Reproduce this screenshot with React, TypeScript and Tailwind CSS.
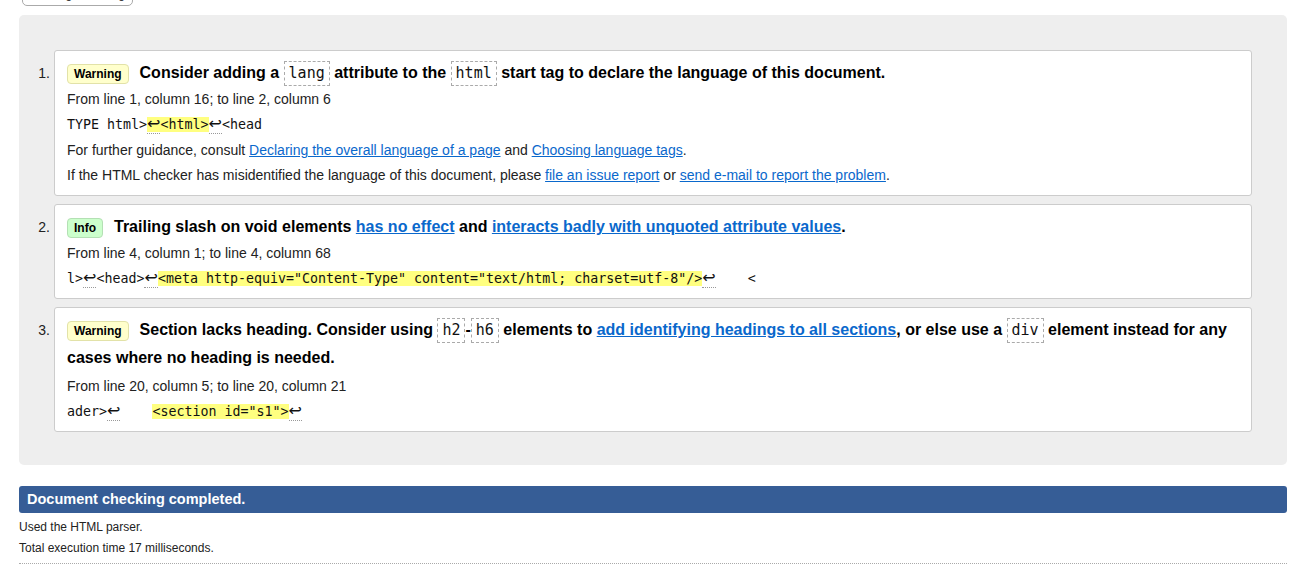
import React from "react";

const mono = "font-['DejaVu_Sans_Mono','Liberation_Mono',monospace]";

function Nl() {
  return (
    <span className="border-b border-dotted border-[#999] font-['DejaVu_Sans',sans-serif] text-[16px] leading-[16px]">
      ↩
    </span>
  );
}

function Hl({ children }: { children: React.ReactNode }) {
  return <span className="bg-[#ffff80]">{children}</span>;
}

function Code({ children }: { children: React.ReactNode }) {
  return (
    <code
      className={`${mono} inline-block border border-dashed border-[#aaa] bg-white px-[4px] py-[2px] text-[15px] font-normal leading-[19px] text-[#111]`}
    >
      {children}
    </code>
  );
}

function Badge({ kind }: { kind: "Warning" | "Info" }) {
  return kind === "Warning" ? (
    <span className="mr-[11px] inline-block rounded-[4px] border border-[#e2e2a8] bg-[#ffffcc] px-[6px] text-[12px] font-bold leading-[18px] text-black">
      Warning
    </span>
  ) : (
    <span className="mr-[11px] inline-block rounded-[4px] border border-[#b4e0b4] bg-[#ccffcc] px-[6px] text-[12px] font-bold leading-[18px] text-black">
      Info
    </span>
  );
}

function A({ children, bold }: { children: React.ReactNode; bold?: boolean }) {
  return (
    <a href="#" className={bold ? "font-bold text-[#0a68cc] underline" : "text-[#0a68cc] underline"}>
      {children}
    </a>
  );
}

function Item({ n, children }: { n: number; children: React.ReactNode }) {
  return (
    <li className="flex">
      <div className="w-[35px] shrink-0 pr-[4px] pt-[9px] text-right text-[14px] leading-[28px] text-[#222]">{n}.</div>
      <div className="flex-1 rounded-[3px] border border-[#cccccc] bg-white px-[12px] pb-[7px] pt-[8px]">{children}</div>
    </li>
  );
}

export default function App() {
  return (
    <div className="min-h-screen bg-white font-['Liberation_Sans',Arial,sans-serif] text-[#222]">
      {/* cut-off filter button */}
      <div className="ml-[22px] h-[6px] overflow-hidden">
        <div className="-mt-[19px] flex h-[25px] w-[111px] items-center justify-center rounded-[5px] border border-[#aaa] bg-white text-[12px] text-[#222]">
          Message Filtering
        </div>
      </div>

      {/* results */}
      <div className="ml-[19px] mr-[17px] mt-[9px] rounded-[5px] bg-[#eeeeee] pb-[33px] pr-[35px] pt-[35px]">
        <ol className="flex flex-col gap-[8px]">
          <Item n={1}>
            <p className="text-[16px] font-bold leading-[28px] text-black">
              <Badge kind="Warning" />
              Consider adding a <Code>lang</Code> attribute to the <Code>html</Code> start tag to declare the language of
              this document.
            </p>
            <p className="text-[14px] leading-[25px]">From line 1, column 16; to line 2, column 6</p>
            <p className={`${mono} whitespace-pre text-[13.3px] leading-[25px] text-[#111]`}>
              TYPE html&gt;
              <Hl>
                <Nl />
                &lt;html&gt;
              </Hl>
              <Nl />
              &lt;head
            </p>
            <p className="text-[14px] leading-[26px]">
              For further guidance, consult <A>Declaring the overall language of a page</A> and{" "}
              <A>Choosing language tags</A>.
            </p>
            <p className="text-[14px] leading-[25px]">
              If the HTML checker has misidentified the language of this document, please <A>file an issue report</A> or{" "}
              <A>send e-mail to report the problem</A>.
            </p>
          </Item>

          <Item n={2}>
            <p className="text-[16px] font-bold leading-[28px] text-black">
              <Badge kind="Info" />
              Trailing slash on void elements <A bold>has no effect</A> and{" "}
              <A bold>interacts badly with unquoted attribute values</A>.
            </p>
            <p className="text-[14px] leading-[25px]">From line 4, column 1; to line 4, column 68</p>
            <p className={`${mono} whitespace-pre text-[13.3px] leading-[25px] text-[#111]`}>
              l&gt;
              <Nl />
              &lt;head&gt;
              <Nl />
              <Hl>&lt;meta http-equiv="Content-Type" content="text/html; charset=utf-8"/&gt;</Hl>
              <Nl />
              {"    <"}
            </p>
          </Item>

          <Item n={3}>
            <p className="text-[16px] font-bold leading-[28px] text-black">
              <Badge kind="Warning" />
              Section lacks heading. Consider using <Code>h2</Code>-<Code>h6</Code> elements to{" "}
              <A bold>add identifying headings to all sections</A>, or else use a <Code>div</Code> element instead for
              any cases where no heading is needed.
            </p>
            <p className="pt-[2px] text-[14px] leading-[25px]">From line 20, column 5; to line 20, column 21</p>
            <p className={`${mono} whitespace-pre text-[13.3px] leading-[25px] text-[#111]`}>
              ader&gt;
              <Nl />
              {"    "}
              <Hl>&lt;section id="s1"&gt;</Hl>
              <Nl />
            </p>
          </Item>
        </ol>
      </div>

      {/* footer */}
      <div className="ml-[19px] mr-[17px] mt-[21px]">
        <div className="flex h-[27px] items-center rounded-[3px] bg-[#365d96] px-[8px] text-[14.5px] font-bold text-white">
          Document checking completed.
        </div>
        <p className="mt-[4px] text-[12px] leading-[21px]">Used the HTML parser.</p>
        <p className="text-[12px] leading-[21px]">Total execution time 17 milliseconds.</p>
        <div className="mt-[4px] border-b border-dotted border-[#aaa]" />
      </div>
    </div>
  );
}
